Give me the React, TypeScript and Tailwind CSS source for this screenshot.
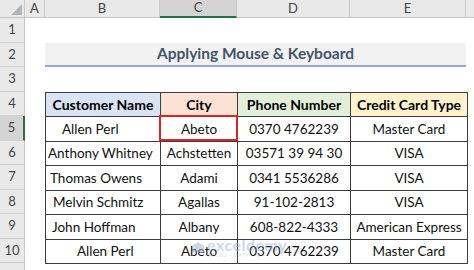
import React from "react";

const F = { fontFamily: "Lato, 'Liberation Sans', sans-serif" };

const cols = [
  { l: "A", w: "w-[20px]" },
  { l: "B", w: "w-[115px]" },
  { l: "C", w: "w-[77px]", sel: true },
  { l: "D", w: "w-[113px]" },
  { l: "E", w: "w-[116px]" },
];

const rows = [
  ["Allen Perl", "pl-[16px]", "Abeto", "0370 4762239", "Master Card"],
  ["Anthony Whitney", "pl-[2px]", "Achstetten", "03571 39 94 30", "VISA"],
  ["Thomas Owens", "pl-[4px]", "Adami", "0341 5536286", "VISA"],
  ["Melvin Schmitz", "pl-[7px]", "Agallas", "91-102-2813", "VISA"],
  ["John Hoffman", "pl-[6px]", "Albany", "608-822-4333", "American Express"],
  ["Allen Perl", "pl-[31px]", "Abeto", "0370 4762239", "Master Card"],
];

export default function App() {
  return (
    <div className="relative w-[474px] h-[270px] overflow-hidden bg-white" style={F}>
      {/* column headers */}
      <div className="flex h-[18px] bg-[#e9e9e9] border-b border-[#c4c4c4] text-[13px] text-[#444]">
        <div className="relative w-[25px] border-r border-[#c8c8c8]">
          <svg className="absolute left-[11px] top-[4px]" width="11" height="11" viewBox="0 0 11 11">
            <polygon points="11,0 11,11 0,11" fill="#b5b5b5" />
          </svg>
        </div>
        {cols.map((c) => (
          <div
            key={c.l}
            className={`${c.w} flex items-center justify-center border-r ${
              c.sel ? "bg-[#d4d4d4] border-[#c8c8c8] border-b-2 border-b-[#217346] -mb-px" : "border-[#c8c8c8]"
            }`}
          >
            {c.l}
          </div>
        ))}
        <div className="flex-1" />
      </div>

      <div className="flex">
        {/* row headers */}
        <div className="w-[25px] shrink-0 bg-[#e9e9e9] text-[13px] text-[#444]">
          {[1, 2, 3, 4, 5, 6, 7, 8, 9, 10, 11].map((n) => (
            <div
              key={n}
              className={`h-[24.5px] flex items-center justify-center border-b border-[#cfcfcf] ${
                n === 5 ? "bg-[#d4d4d4] border-r-2 border-r-[#217346]" : "border-r border-r-[#c8c8c8]"
              }`}
            >
              {n < 11 ? n : ""}
            </div>
          ))}
        </div>

        {/* sheet */}
        <div className="relative flex-1">
          <div className="h-[24.5px]" />
          <div className="h-[24.5px] pl-[20px]">
            <div className="w-[421px] h-[24.5px] bg-[#f2f2f2] border-b-2 border-[#9aa3de] flex items-center justify-center text-[15.5px] font-bold text-[#44546a]">
              Applying Mouse &amp; Keyboard
            </div>
          </div>
          <div className="h-[24.5px]" />
          <div className="pl-[20px]">
            <table className="table-fixed border-collapse w-[422px] text-[13.5px] text-[#111]">
              <colgroup>
                <col className="w-[115px]" />
                <col className="w-[77px]" />
                <col className="w-[113px]" />
                <col className="w-[117px]" />
              </colgroup>
              <thead>
                <tr className="h-[24.5px] font-bold text-[14px] text-black">
                  <th className="p-0 border border-[#3d3d3d] bg-[#dae3f3]">Customer Name</th>
                  <th className="p-0 border border-[#3d3d3d] bg-[#fbe2d5]">City</th>
                  <th className="p-0 border border-[#3d3d3d] bg-[#e2efda]">Phone Number</th>
                  <th className="p-0 border border-[#3d3d3d] bg-[#fff2cc]">Credit Card Type</th>
                </tr>
              </thead>
              <tbody>
                {rows.map((r, i) => (
                  <tr key={i} className="h-[24.5px]">
                    <td className={`p-0 ${r[1]} border border-[#3d3d3d] text-left whitespace-nowrap`}>{r[0]}</td>
                    <td className="p-0 border border-[#3d3d3d] text-center">{r[2]}</td>
                    <td className="p-0 border border-[#3d3d3d] text-center">{r[3]}</td>
                    <td className="p-0 border border-[#3d3d3d] text-center">{r[4]}</td>
                  </tr>
                ))}
              </tbody>
            </table>
          </div>

          {/* selection box */}
          <div className="absolute left-[134px] top-[97px] w-[79px] h-[26px] border-2 border-[#e02424]" />

          {/* watermark */}
          <div className="absolute left-[166px] top-[219px] flex items-center gap-[2px] opacity-50 pointer-events-none">
            <svg width="14" height="14" viewBox="0 0 14 14">
              <path d="M7 1 L13 5 L13 12 L1 12 L1 5 Z" fill="#9fb0d0" />
            </svg>
            <div className="flex flex-col leading-none">
              <span className="text-[16px] font-bold text-[#9fb0d8] tracking-[0.5px]">exceldemy</span>
              <span className="text-[5px] text-[#b0b8c8] tracking-[1px]">EXCEL · DATA · BI</span>
            </div>
          </div>
        </div>
      </div>
    </div>
  );
}
